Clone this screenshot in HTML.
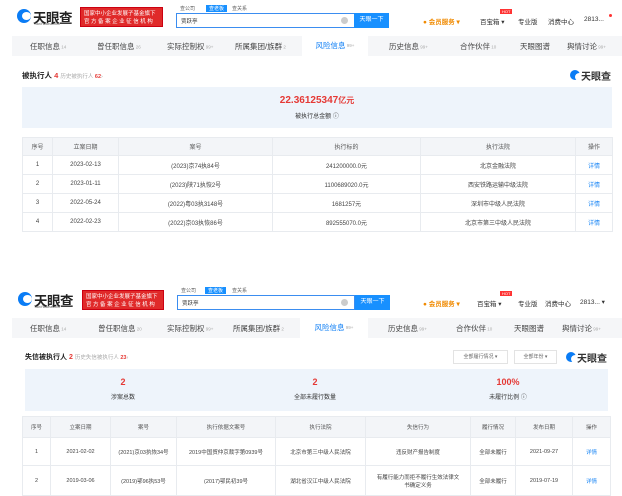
<!DOCTYPE html>
<html><head><meta charset="utf-8">
<style>
*{margin:0;padding:0;box-sizing:border-box}
body{width:622px;height:494px;background:#fff;font-family:"Liberation Sans","Noto Sans CJK SC",sans-serif;color:#333;position:relative;overflow:hidden;font-size:7px}
.a{position:absolute;white-space:nowrap}
.logo{font-size:13.5px;font-weight:bold;color:#222;letter-spacing:-0.5px}
.circ{display:inline-block;width:14px;height:14px;border-radius:50%;background:#0a7cf5;position:absolute}
.circ:after{content:"";position:absolute;left:5px;top:3px;width:9px;height:8px;background:#fff;border-radius:50%}
.banner{background:#e02a2a;color:#fff;font-size:5.5px;line-height:8px;padding:2px 3px;border:1px solid #c01}
.sbox{border:1px solid #3b8df0;background:#fff}
.btn{background:#1890ff;color:#fff;font-size:6px;text-align:center}
.nav{background:#f5f6f8}
.nav span{position:absolute;font-size:7.5px;color:#444;top:0}
.nav sup{font-size:4.5px;color:#aaa;vertical-align:middle}
.act{background:#fff;color:#0a7cf5!important;text-align:center}
.sum{background:#eef4fb}
table{border-collapse:collapse;position:absolute;font-size:6px;color:#444;table-layout:fixed}
td,th{border:1px solid #e8ebef;text-align:center;font-weight:normal;overflow:hidden}
th{background:#f3f5f8;color:#555}
.lk{color:#1e88f5}
.red{color:#e53935}
.dd{border:1px solid #e3e3e3;font-size:5px;color:#666;text-align:center;line-height:12px}
</style></head><body>

<!-- TOP -->
<div class="circ" style="left:17px;top:9px"></div>
<div class="a logo" style="left:33px;top:7px">天眼查</div>
<div class="a" style="left:34px;top:22px;font-size:3.5px;color:#555">TianYancha.com</div>
<div class="a banner" style="left:80px;top:7px;width:83px;height:20px">国家中小企业发展子基金旗下<br>官 方 备 案 企 业 征 信 机 构</div>
<div class="a" style="left:180px;top:5px;font-size:5px;color:#666">查公司</div>
<div class="a" style="left:206px;top:5px;font-size:5px;color:#fff;background:#1890ff;padding:0 3px">查老板</div>
<div class="a" style="left:232px;top:5px;font-size:5px;color:#666">查关系</div>
<div class="a sbox" style="left:176px;top:13px;width:179px;height:15px"><span class="a" style="left:4px;top:3px;font-size:5.5px">贾跃亭</span><span class="a" style="right:6px;top:3px;width:7px;height:7px;border-radius:50%;background:#ccc"></span></div>
<div class="a btn" style="left:354px;top:13px;width:35px;height:15px;line-height:15px">天眼一下</div>
<div class="a" style="left:423px;top:16px;font-size:6.5px;color:#f08a00;font-weight:bold">● 会员服务 ▾</div>
<div class="a" style="left:480px;top:16px;font-size:6.5px">百宝箱 ▾</div>
<div class="a" style="left:500px;top:9px;font-size:4px;color:#fff;background:#f33;padding:0 2px">HOT</div>
<div class="a" style="left:518px;top:16px;font-size:6.5px">专业版</div>
<div class="a" style="left:548px;top:16px;font-size:6.5px">消费中心</div>
<div class="a" style="left:584px;top:16px;font-size:6.5px">2813...</div>
<div class="a" style="left:609px;top:14px;width:3px;height:3px;border-radius:50%;background:#f33"></div>

<div class="a nav" style="left:12px;top:36px;width:610px;height:20px">
<span style="left:18px;top:5px">任职信息<sup> 14</sup></span>
<span style="left:85px;top:5px">曾任职信息<sup> 26</sup></span>
<span style="left:155px;top:5px">实际控制权<sup> 99+</sup></span>
<span style="left:223px;top:5px">所属集团/族群<sup> 2</sup></span>
<span class="act" style="left:290px;top:0;width:66px;height:20px;line-height:20px">风险信息<sup> 99+</sup></span>
<span style="left:377px;top:5px">历史信息<sup> 99+</sup></span>
<span style="left:448px;top:5px">合作伙伴<sup> 10</sup></span>
<span style="left:508px;top:5px">天眼图谱</span>
<span style="left:555px;top:5px">舆情讨论<sup> 99+</sup></span>
</div>

<div class="a" style="left:22px;top:70px;font-size:7.5px;font-weight:bold;color:#222">被执行人 <span class="red">4</span> <span style="font-size:5.5px;color:#aaa;font-weight:normal">历史被执行人 <b class="red">62</b>›</span></div>
<div class="circ" style="left:570px;top:70px;width:10px;height:10px"></div>
<div class="a" style="left:581px;top:68px;font-size:10px;font-weight:bold">天眼查</div>

<div class="a sum" style="left:22px;top:87px;width:590px;height:41px">
<div class="a red" style="left:0;width:590px;text-align:center;top:8px;font-size:10px;font-weight:bold">22.36125347<span style="font-size:8px">亿元</span></div>
<div class="a" style="left:0;width:590px;text-align:center;top:24px;font-size:6px">被执行总金额 ⓘ</div>
</div>

<table style="left:22px;top:137px;width:590px">
<colgroup><col style="width:30px"><col style="width:66px"><col style="width:154px"><col style="width:148px"><col style="width:155px"><col style="width:37px"></colgroup>
<tr style="height:18px"><th>序号</th><th>立案日期</th><th>案号</th><th>执行标的</th><th>执行法院</th><th>操作</th></tr>
<tr style="height:19px"><td>1</td><td>2023-02-13</td><td>(2023)京74执84号</td><td>241200000.0元</td><td>北京金融法院</td><td class="lk">详情</td></tr>
<tr style="height:19px"><td>2</td><td>2023-01-11</td><td>(2023)陕71执恢2号</td><td>1100689020.0元</td><td>西安铁路运输中级法院</td><td class="lk">详情</td></tr>
<tr style="height:19px"><td>3</td><td>2022-05-24</td><td>(2022)粤03执3148号</td><td>1681257元</td><td>深圳市中级人民法院</td><td class="lk">详情</td></tr>
<tr style="height:19px"><td>4</td><td>2022-02-23</td><td>(2022)京03执恢86号</td><td>892555070.0元</td><td>北京市第三中级人民法院</td><td class="lk">详情</td></tr>
</table>

<!-- BOTTOM -->
<div class="circ" style="left:18px;top:292px"></div>
<div class="a logo" style="left:34px;top:290px">天眼查</div>
<div class="a" style="left:34px;top:305px;font-size:3.5px;color:#555">TianYancha.com</div>
<div class="a banner" style="left:82px;top:290px;width:82px;height:20px">国家中小企业发展子基金旗下<br>官 方 备 案 企 业 征 信 机 构</div>
<div class="a" style="left:181px;top:287px;font-size:5px;color:#666">查公司</div>
<div class="a" style="left:205px;top:287px;font-size:5px;color:#fff;background:#1890ff;padding:0 3px">查老板</div>
<div class="a" style="left:232px;top:287px;font-size:5px;color:#666">查关系</div>
<div class="a sbox" style="left:177px;top:295px;width:178px;height:15px"><span class="a" style="left:4px;top:3px;font-size:5.5px">贾跃亭</span><span class="a" style="right:6px;top:3px;width:7px;height:7px;border-radius:50%;background:#ccc"></span></div>
<div class="a btn" style="left:355px;top:295px;width:35px;height:15px;line-height:15px">天眼一下</div>
<div class="a" style="left:423px;top:298px;font-size:6.5px;color:#f08a00;font-weight:bold">● 会员服务 ▾</div>
<div class="a" style="left:477px;top:298px;font-size:6.5px">百宝箱 ▾</div>
<div class="a" style="left:500px;top:291px;font-size:4px;color:#fff;background:#f33;padding:0 2px">HOT</div>
<div class="a" style="left:518px;top:298px;font-size:6.5px">专业版</div>
<div class="a" style="left:545px;top:298px;font-size:6.5px">消费中心</div>
<div class="a" style="left:580px;top:298px;font-size:6.5px">2813... ▾</div>

<div class="a nav" style="left:12px;top:318px;width:610px;height:20px">
<span style="left:18px;top:5px">任职信息<sup> 14</sup></span>
<span style="left:86px;top:5px">曾任职信息<sup> 20</sup></span>
<span style="left:155px;top:5px">实际控制权<sup> 99+</sup></span>
<span style="left:221px;top:5px">所属集团/族群<sup> 2</sup></span>
<span class="act" style="left:288px;top:0;width:68px;height:20px;line-height:20px">风险信息<sup> 99+</sup></span>
<span style="left:376px;top:5px">历史信息<sup> 99+</sup></span>
<span style="left:444px;top:5px">合作伙伴<sup> 10</sup></span>
<span style="left:502px;top:5px">天眼图谱</span>
<span style="left:550px;top:5px">舆情讨论<sup> 99+</sup></span>
</div>

<div class="a" style="left:25px;top:352px;font-size:7px;font-weight:bold;color:#222">失信被执行人 <span class="red">2</span> <span style="font-size:5.5px;color:#aaa;font-weight:normal">历史失信被执行人 <b class="red">23</b>›</span></div>
<div class="a dd" style="left:453px;top:350px;width:55px;height:14px">全部履行情况 ▾</div>
<div class="a dd" style="left:514px;top:350px;width:43px;height:14px">全部年份 ▾</div>
<div class="circ" style="left:566px;top:352px;width:10px;height:10px"></div>
<div class="a" style="left:577px;top:350px;font-size:10px;font-weight:bold">天眼查</div>

<div class="a sum" style="left:25px;top:369px;width:583px;height:42px">
<div class="a red" style="left:0;width:196px;text-align:center;top:8px;font-size:9px;font-weight:bold">2</div>
<div class="a" style="left:0;width:196px;text-align:center;top:23px;font-size:6px">涉案总数</div>
<div class="a red" style="left:192px;width:196px;text-align:center;top:8px;font-size:9px;font-weight:bold">2</div>
<div class="a" style="left:192px;width:196px;text-align:center;top:23px;font-size:6px">全部未履行数量</div>
<div class="a red" style="left:385px;width:196px;text-align:center;top:8px;font-size:9px;font-weight:bold">100%</div>
<div class="a" style="left:385px;width:196px;text-align:center;top:23px;font-size:6px">未履行比例 ⓘ</div>
</div>

<table style="left:22px;top:416px;width:588px;font-size:5.5px">
<colgroup><col style="width:28px"><col style="width:60px"><col style="width:66px"><col style="width:99px"><col style="width:90px"><col style="width:105px"><col style="width:45px"><col style="width:57px"><col style="width:38px"></colgroup>
<tr style="height:21px"><th>序号</th><th>立案日期</th><th>案号</th><th>执行依据文案号</th><th>执行法院</th><th>失信行为</th><th>履行情况</th><th>发布日期</th><th>操作</th></tr>
<tr style="height:28px"><td>1</td><td>2021-02-02</td><td>(2021)京03执恢34号</td><td style="white-space:normal;padding:0 8px">2019中国贸仲京裁字第0939号</td><td>北京市第三中级人民法院</td><td>违反财产报告制度</td><td>全部未履行</td><td>2021-09-27</td><td class="lk">详情</td></tr>
<tr style="height:30px"><td>2</td><td>2019-03-06</td><td>(2019)鄂96执53号</td><td>(2017)鄂民初39号</td><td>湖北省汉江中级人民法院</td><td style="white-space:normal;padding:0 10px">有履行能力而拒不履行生效法律文书确定义务</td><td>全部未履行</td><td>2019-07-19</td><td class="lk">详情</td></tr>
</table>

</body></html>
